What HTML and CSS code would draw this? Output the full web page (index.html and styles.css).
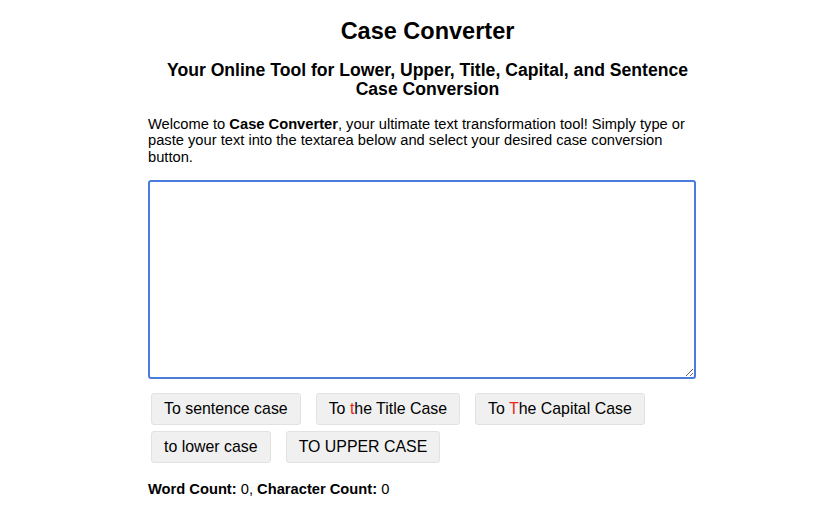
FILE: index.html
```html
<!DOCTYPE html>
<html lang="en">
<head>
<meta charset="utf-8">
<title>Case Converter</title>
<link rel="stylesheet" href="styles.css">
</head>
<body>
<main class="container">
  <h1 class="title">Case Converter</h1>
  <h2 class="subtitle">Your Online Tool for Lower, Upper, Title, Capital, and Sentence Case Conversion</h2>
  <p class="intro">Welcome to <strong>Case Converter</strong>, your ultimate text transformation tool! Simply type or paste your text into the textarea below and select your desired case conversion button.</p>
  <textarea class="editor"></textarea>
  <div class="buttons">
    <button class="btn">To sentence case</button>
    <button class="btn">To <span class="hl">t</span>he Title Case</button>
    <button class="btn">To <span class="hl">T</span>he Capital Case</button>
    <button class="btn">to lower case</button>
    <button class="btn">TO UPPER CASE</button>
  </div>
  <p class="counts"><strong>Word Count:</strong> 0, <strong>Character Count:</strong> 0</p>
</main>
</body>
</html>
```
FILE: styles.css
```css
html, body {
  margin: 0;
  background: #ffffff;
}
body {
  padding-left: 15px;
  font-family: "Liberation Sans", Arial, sans-serif;
  color: #000;
}
.container {
  width: 559px;
  margin: 0 auto;
  padding-top: 1px;
}
.title {
  font-size: 23.5px;
  text-align: center;
  margin: 16px 0 0;
  line-height: 28px;
}
.subtitle {
  font-size: 17.6px;
  text-align: center;
  margin: 16px 0 0;
  line-height: 18.5px;
}
.intro {
  font-size: 14.7px;
  line-height: 16.5px;
  margin: 17.5px 0 0;
}
.editor {
  display: block;
  width: 98%;
  box-sizing: border-box;
  height: 199px;
  margin-top: 15px;
  border: 2px solid #4a7ddb;
  border-radius: 3px;
  outline: none;
  padding: 4px;
  font-family: inherit;
}
.buttons {
  display: flex;
  flex-wrap: wrap;
  gap: 6px 15px;
  margin: 14px 0 0 3px;
  width: 520px;
}
.btn {
  font-family: inherit;
  font-size: 15.9px;
  color: #000;
  background: #f0f0f0;
  border: 1px solid #e2e2e2;
  border-radius: 3px;
  padding: 0 12px;
  height: 32px;
}
.hl {
  color: #e8261b;
}
.counts {
  font-size: 14.7px;
  margin: 18px 0 0;
}
```
